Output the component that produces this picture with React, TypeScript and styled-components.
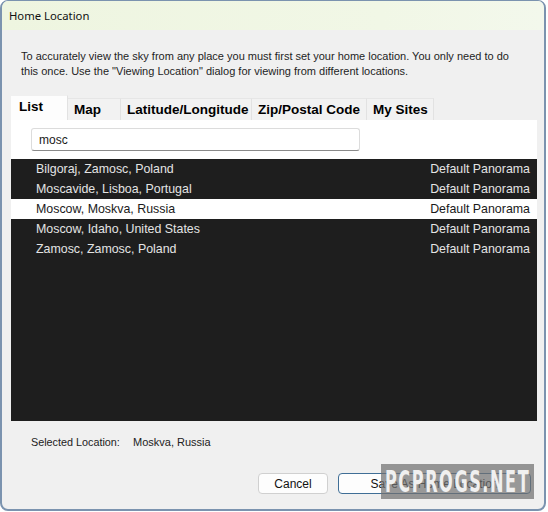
import React from "react";
import styled, { createGlobalStyle } from "styled-components";

const GlobalStyle = createGlobalStyle`
  html, body {
    margin: 0;
    padding: 0;
    background: #ffffff;
  }
  body {
    font-family: "Liberation Sans", Arial, sans-serif;
    color: #1a1a1a;
  }
`;

const Window = styled.div`
  position: relative;
  box-sizing: border-box;
  width: 546px;
  height: 511px;
  display: flex;
  flex-direction: column;
  border-style: solid;
  border-color: #7b93af;
  border-width: 1px 2px 2px 2px;
  border-radius: 8px;
  overflow: hidden;
  background: #f0f0f0;
`;

const TitleBar = styled.div`
  height: 29px;
  flex: none;
  display: flex;
  align-items: center;
  padding-left: 7px;
  background: linear-gradient(to right, #eef5e0, #f1f7e6 70%, #f3f8ec);
  font-family: "Noto Sans", "Open Sans", sans-serif;
  font-size: 11.3px;
  color: #111;
`;

const Body = styled.div`
  flex: 1;
  display: flex;
  flex-direction: column;
  padding: 19px 7px 0 9px;
`;

const Intro = styled.p`
  margin: 0 0 16px 10px;
  width: 500px;
  font-size: 11px;
  line-height: 15px;
  color: #1e1e1e;
`;

const TabRow = styled.div`
  display: flex;
  align-items: flex-end;
  height: 25px;
`;

const Tab = styled.div<{ $w: number; $active?: boolean }>`
  box-sizing: border-box;
  width: ${(p) => p.$w}px;
  height: ${(p) => (p.$active ? 25 : 22)}px;
  padding: ${(p) => (p.$active ? "3px 0 0 8px" : "3px 0 0 6px")};
  background: ${(p) => (p.$active ? "#fdfdfd" : "#f2f2f2")};
  border-right: 1px solid #e2e2e2;
  border-top: 1px solid ${(p) => (p.$active ? "#f0f0f0" : "#e6e6e6")};
  font-weight: bold;
  font-size: 13.5px;
  line-height: 16px;
  color: #000;
  white-space: nowrap;
`;

const Panel = styled.div`
  display: flex;
  flex-direction: column;
  width: 526px;
  height: 301px;
  background: #ffffff;
`;

const SearchBox = styled.div`
  box-sizing: border-box;
  margin: 8px 0 8px 20px;
  width: 329px;
  height: 23px;
  padding: 0 0 0 7px;
  display: flex;
  align-items: center;
  background: #fff;
  border: 1px solid #dcdcdc;
  border-bottom: 1px solid #8a8a8a;
  border-radius: 3px;
  font-size: 12px;
  color: #1a1a1a;
`;

const List = styled.div`
  flex: 1;
  background: #1e1e1e;
`;

const Row = styled.div<{ $selected?: boolean }>`
  height: 20px;
  display: flex;
  justify-content: space-between;
  padding: 0 7px 0 25px;
  font-size: 12.4px;
  line-height: 20px;
  background: ${(p) => (p.$selected ? "#ffffff" : "transparent")};
  color: ${(p) => (p.$selected ? "#1a1a1a" : "#e4e4e4")};
`;

const SelectedLine = styled.div`
  display: flex;
  align-items: center;
  margin: 14px 0 0 20px;
  height: 14px;
  font-size: 10.8px;
  color: #222;
`;

const SelectedLabel = styled.span`
  width: 102px;
`;

const SelectedValue = styled.span`
  font-size: 11px;
`;

const ButtonRow = styled.div`
  display: flex;
  justify-content: flex-end;
  gap: 10px;
  margin: 24px 6px 0 0;
`;

const Button = styled.div<{ $w: number; $default?: boolean }>`
  box-sizing: border-box;
  width: ${(p) => p.$w}px;
  height: 21px;
  display: flex;
  align-items: center;
  justify-content: center;
  background: #fdfdfd;
  border: 1px solid ${(p) => (p.$default ? "#3f6e96" : "#d0d0d0")};
  border-radius: 4px;
  font-size: 12px;
  color: #111;
`;

/* site stamp laid over the bottom-right corner */
const Stamp = styled.div`
  position: absolute;
  left: 379px;
  top: 463px;
  box-sizing: border-box;
  width: 153px;
  height: 35px;
  padding-left: 4px;
  display: flex;
  align-items: center;
  background: rgba(112, 112, 112, 0.72);
  overflow: hidden;
`;

const StampText = styled.span`
  flex: none;
  display: inline-block;
  transform: scaleX(0.52);
  transform-origin: left center;
  font-family: "DejaVu Sans", sans-serif;
  font-weight: bold;
  font-size: 31px;
  line-height: 31px;
  letter-spacing: 3px;
  color: #f0f0f0;
  white-space: nowrap;
`;

const tabs = [
  { label: "List", w: 57, active: true },
  { label: "Map", w: 53 },
  { label: "Latitude/Longitude", w: 131 },
  { label: "Zip/Postal Code", w: 115 },
  { label: "My Sites", w: 67 },
];

const places = [
  "Bilgoraj, Zamosc, Poland",
  "Moscavide, Lisboa, Portugal",
  "Moscow, Moskva, Russia",
  "Moscow, Idaho, United States",
  "Zamosc, Zamosc, Poland",
];

export default function App() {
  return (
    <>
      <GlobalStyle />
      <Window>
        <TitleBar>Home Location</TitleBar>
        <Body>
          <Intro>
            To accurately view the sky from any place you must first set your home location. You
            only need to do this once. Use the "Viewing Location" dialog for viewing from different
            locations.
          </Intro>
          <TabRow>
            {tabs.map((t) => (
              <Tab key={t.label} $w={t.w} $active={t.active}>
                {t.label}
              </Tab>
            ))}
          </TabRow>
          <Panel>
            <SearchBox>mosc</SearchBox>
            <List>
              {places.map((p, i) => (
                <Row key={p} $selected={i === 2}>
                  <span>{p}</span>
                  <span>Default Panorama</span>
                </Row>
              ))}
            </List>
          </Panel>
          <SelectedLine>
            <SelectedLabel>Selected Location:</SelectedLabel>
            <SelectedValue>Moskva, Russia</SelectedValue>
          </SelectedLine>
          <ButtonRow>
            <Button $w={70}>Cancel</Button>
            <Button $w={193} $default>
              Save As Home Location
            </Button>
          </ButtonRow>
        </Body>
        <Stamp>
          <StampText>PCPROGS.NET</StampText>
        </Stamp>
      </Window>
    </>
  );
}
